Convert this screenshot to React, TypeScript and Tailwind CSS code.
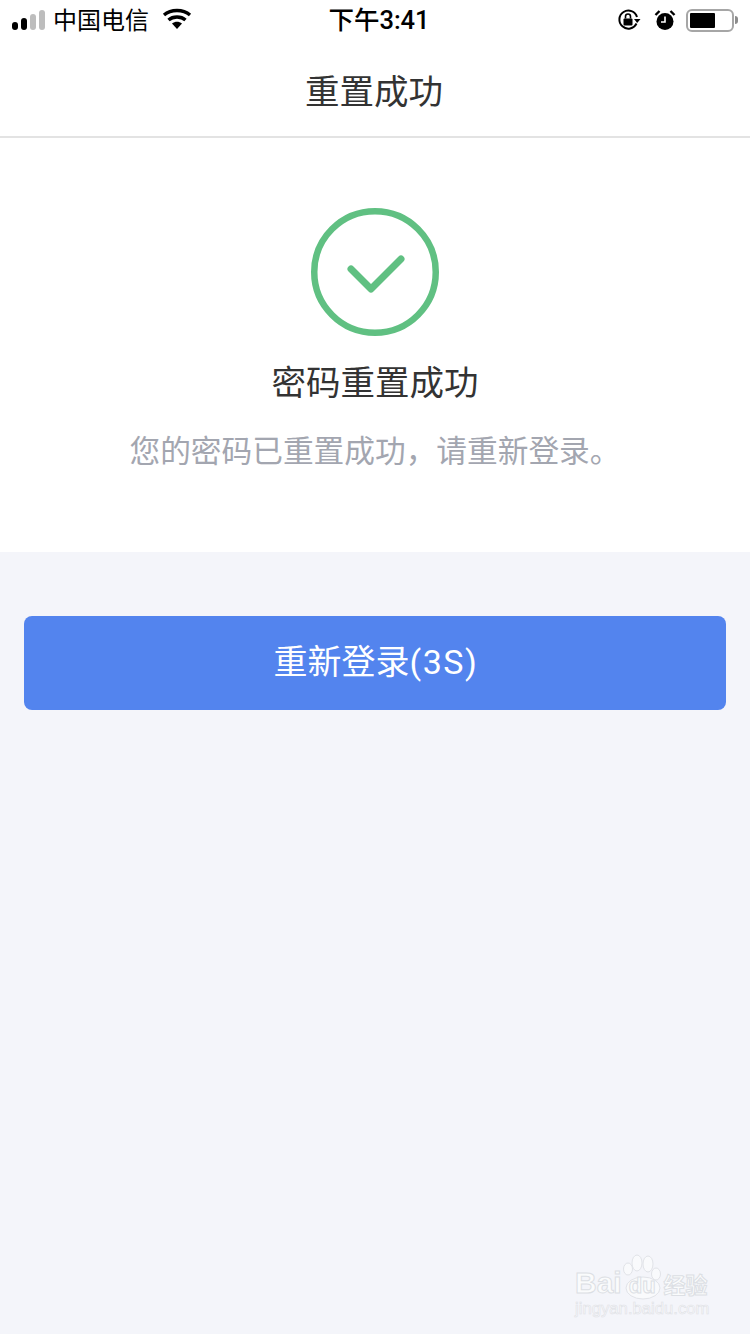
const CJK = "font-['Roboto','Noto_Sans_CJK_SC',sans-serif]"

function StatusBar() {
  return (
    <div className={`flex h-10 items-center justify-between bg-white pl-3 pr-3 text-black ${CJK}`}>
      <div className="flex w-[250px] items-center">
        <div className="flex items-end gap-[3px]">
          <span className="h-[8px] w-[6px] rounded-full bg-black" />
          <span className="h-[12px] w-[6px] rounded-full bg-black" />
          <span className="h-[16px] w-[6px] rounded-full bg-[#bdbdbd]" />
          <span className="h-[20px] w-[6px] rounded-full bg-[#bdbdbd]" />
        </div>
        <span className="ml-2 mt-[2px] text-[24px] leading-none">中国电信</span>
        <svg className="ml-[13px] mb-[2px]" width="30" height="22" viewBox="0 0 30 22">
          <path d="M15 21 L10 15.5 C13 13 17 13 20 15.5 Z" fill="#000" />
          <path d="M6.5 12 C11 8 19 8 23.5 12" fill="none" stroke="#000" strokeWidth="3.4" />
          <path d="M2 7 C9 1 21 1 28 7" fill="none" stroke="#000" strokeWidth="3.4" />
        </svg>
      </div>
      <span className="ml-[8px] mt-[2px] text-[25.5px] font-medium leading-none">下午3:41</span>
      <div className="flex w-[250px] items-center justify-end">
        <svg width="24" height="24" viewBox="0 0 24 24">
          <path d="M19.5 15.5 A9 9 0 1 1 20 9" fill="none" stroke="#000" strokeWidth="2" />
          <path d="M17 11 L23.5 11 L20.2 15 Z" fill="#000" />
          <rect x="6.5" y="10.5" width="9" height="7" rx="1" fill="#000" />
          <path d="M8.5 10.5 V8.5 A2.5 2.5 0 0 1 13.5 8.5 V10.5" fill="none" stroke="#000" strokeWidth="1.6" />
        </svg>
        <svg className="ml-[13px]" width="22" height="22" viewBox="0 0 22 22">
          <circle cx="11" cy="12.5" r="8.5" fill="#000" />
          <path d="M11 7.5 V13 H7" fill="none" stroke="#fff" strokeWidth="1.6" />
          <path d="M1.5 6 L5.5 2 M20.5 6 L16.5 2" stroke="#000" strokeWidth="2.4" />
        </svg>
        <div className="ml-[10px] flex items-center">
          <div className="flex h-[23px] w-[48px] items-center rounded-[6px] border-2 border-[#a6a6a6] p-[2px]">
            <div className="h-full w-[25px] rounded-[1px] bg-black" />
          </div>
          <span className="ml-[1px] h-[8px] w-[3px] rounded-r-full bg-[#8c8c8c]" />
        </div>
      </div>
    </div>
  )
}

function Watermark() {
  return (
    <div className="pointer-events-none absolute bottom-[15px] left-[575px] w-[136px] select-none">
      <svg className="absolute left-[45px] top-[8px]" width="45" height="48" viewBox="0 0 45 48">
        <ellipse cx="8" cy="17" rx="4.5" ry="6" fill="#f9fafc" stroke="#e1e3e8" strokeWidth="1" />
        <ellipse cx="17" cy="11" rx="5" ry="8" fill="#f9fafc" stroke="#e1e3e8" strokeWidth="1" />
        <ellipse cx="28" cy="12" rx="5" ry="8" fill="#f9fafc" stroke="#e1e3e8" strokeWidth="1" />
        <ellipse cx="36" cy="22" rx="4.5" ry="6" fill="#f9fafc" stroke="#e1e3e8" strokeWidth="1" />
        <ellipse cx="23" cy="36" rx="17" ry="11" fill="#f9fafc" stroke="#e1e3e8" strokeWidth="1" />
      </svg>
      <div className="relative flex h-[54px] items-end font-['Liberation_Sans',sans-serif] leading-none text-[#fafbfc] [-webkit-text-stroke:1px_#dcdfe4]">
        <span className="text-[30px] font-bold">Bai</span>
        <span className="ml-[7px] mb-[1px] text-[22px] font-bold">du</span>
        <span className={`ml-[8px] mb-[1px] text-[22px] font-bold ${CJK}`}>经验</span>
      </div>
      <div className="relative mt-[1px] font-['Liberation_Sans',sans-serif] text-[16.7px] leading-[20px] text-[#fafbfc] [-webkit-text-stroke:0.6px_#dfe1e6]">
        jingyan.baidu.com
      </div>
    </div>
  )
}

export default function App() {
  return (
    <div className={`relative flex h-[1334px] w-[750px] flex-col overflow-hidden bg-[#f4f5fa] ${CJK}`}>
      <StatusBar />
      <header className="flex h-[98px] items-center justify-center border-b-2 border-[#e3e3e3] bg-white pr-[2px] pt-[8px]">
        <h1 className="text-[34.5px] leading-none text-[#333333]">重置成功</h1>
      </header>
      <section className="flex h-[414px] flex-col items-center bg-white pt-[70px]">
        <svg width="128" height="128" viewBox="0 0 128 128">
          <circle cx="64" cy="64" r="60.75" fill="none" stroke="#60c082" strokeWidth="6.5" />
          <path d="M40 61 L60 81 L90 51" fill="none" stroke="#60c082" strokeWidth="7" strokeLinecap="round" strokeLinejoin="round" />
        </svg>
        <h2 className="mt-[27px] text-[34.5px] leading-[40px] text-[#333333]">密码重置成功</h2>
        <p className="mt-[31px] text-[30.7px] leading-[36px] text-[#a3a6b0]">您的密码已重置成功，请重新登录。</p>
      </section>
      <div className="px-6 pt-16">
        <button className="flex h-[94px] w-full items-center justify-center rounded-[8px] bg-[#5384ee] pb-[3px] pl-[2px] text-[34px] leading-none text-white">
          重新登录<span className="tracking-[1.5px]">(3S)</span>
        </button>
      </div>
      <Watermark />
    </div>
  )
}
